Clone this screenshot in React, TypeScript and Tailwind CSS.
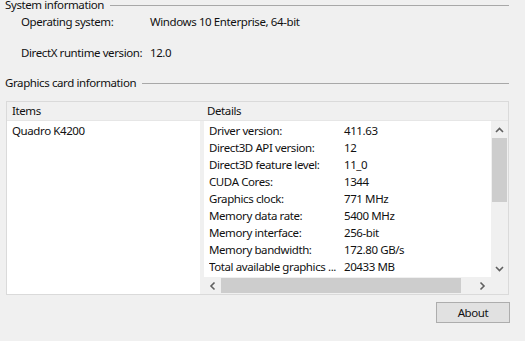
import React from 'react';

const details: [string, string][] = [
  ['Driver version:', '411.63'],
  ['Direct3D API version:', '12'],
  ['Direct3D feature level:', '11_0'],
  ['CUDA Cores:', '1344'],
  ['Graphics clock:', '771 MHz'],
  ['Memory data rate:', '5400 MHz'],
  ['Memory interface:', '256-bit'],
  ['Memory bandwidth:', '172.80 GB/s'],
  ['Total available graphics ...', '20433 MB'],
];

const Chevron: React.FC<{ dir: 'up' | 'down' | 'left' | 'right' }> = ({ dir }) => {
  const rot = { up: 'rotate-0', down: 'rotate-180', left: '-rotate-90', right: 'rotate-90' }[dir];
  return (
    <svg width="9" height="6" viewBox="0 0 9 6" className={rot}>
      <path d="M1 5 L4.5 1.5 L8 5" fill="none" stroke="#606060" strokeWidth="1.6" />
    </svg>
  );
};

export default function App() {
  return (
    <div
      className="w-[525px] h-[341px] overflow-hidden bg-[#f0f0f0] text-[11.5px] tracking-[-0.4px] text-[#111] pl-[5px] pr-[16px]"
      style={{ fontFamily: '"Noto Sans", "Open Sans", sans-serif' }}
    >
      {/* System information group */}
      <div className="h-[10px] flex items-center gap-[6px]">
        <span className="leading-[14px] whitespace-nowrap">System information</span>
        <div className="flex-1 h-px bg-[#a8a8a8]" />
      </div>
      <div className="mt-[4px] h-[16px] flex items-center pl-[16px] whitespace-nowrap">
        <span className="w-[129px] shrink-0">Operating system:</span>
        <span>Windows 10 Enterprise, 64-bit</span>
      </div>
      <div className="mt-[15px] h-[16px] flex items-center pl-[16px] whitespace-nowrap">
        <span className="w-[129px] shrink-0">DirectX runtime version:</span>
        <span>12.0</span>
      </div>

      {/* Graphics card group */}
      <div className="mt-[14px] h-[16px] flex items-center gap-[6px]">
        <span className="whitespace-nowrap">Graphics card information</span>
        <div className="flex-1 h-px bg-[#a8a8a8]" />
      </div>

      <div className="mt-[10px] ml-[1px] border border-[#dadada] flex flex-col">
        <div className="h-[19px] flex items-center bg-[#f0f0f0] border-b border-[#e6e6e6]">
          <span className="w-[197px] pl-[5px]">Items</span>
          <span className="pl-[3px]">Details</span>
        </div>
        <div className="h-[173px] flex">
          <div className="w-[193px] bg-white pl-[5px] pt-[1px]">
            <div className="h-[17px] flex items-center">Quadro K4200</div>
          </div>
          <div className="w-[4px]" />
          <div className="flex-1 flex flex-col">
            <div className="h-[156px] flex">
              <div className="flex-1 bg-white pt-[1px] pl-[5px] overflow-hidden">
                {details.map(([k, v]) => (
                  <div key={k} className="h-[17px] flex items-center whitespace-nowrap">
                    <span className="w-[135px] shrink-0 overflow-hidden">{k}</span>
                    <span>{v}</span>
                  </div>
                ))}
              </div>
              <div className="w-[17px] flex flex-col bg-[#f0f0f0]">
                <div className="h-[17px] flex items-center justify-center">
                  <Chevron dir="up" />
                </div>
                <div className="mx-[1px] h-[64px] bg-[#cdcdcd]" />
                <div className="flex-1" />
                <div className="h-[17px] flex items-center justify-center">
                  <Chevron dir="down" />
                </div>
              </div>
            </div>
            <div className="h-[17px] flex bg-[#f0f0f0]">
              <div className="w-[17px] flex items-center justify-center">
                <Chevron dir="left" />
              </div>
              <div className="w-[240px] my-[1px] bg-[#cdcdcd]" />
              <div className="flex-1" />
              <div className="w-[17px] flex items-center justify-center">
                <Chevron dir="right" />
              </div>
              <div className="w-[17px]" />
            </div>
          </div>
        </div>
      </div>

      <div className="mt-[7px] flex justify-end -mr-[1px]">
        <button className="w-[74px] h-[21px] bg-[#e1e1e1] border border-[#adadad] flex items-center justify-center leading-none">
          About
        </button>
      </div>
    </div>
  );
}
